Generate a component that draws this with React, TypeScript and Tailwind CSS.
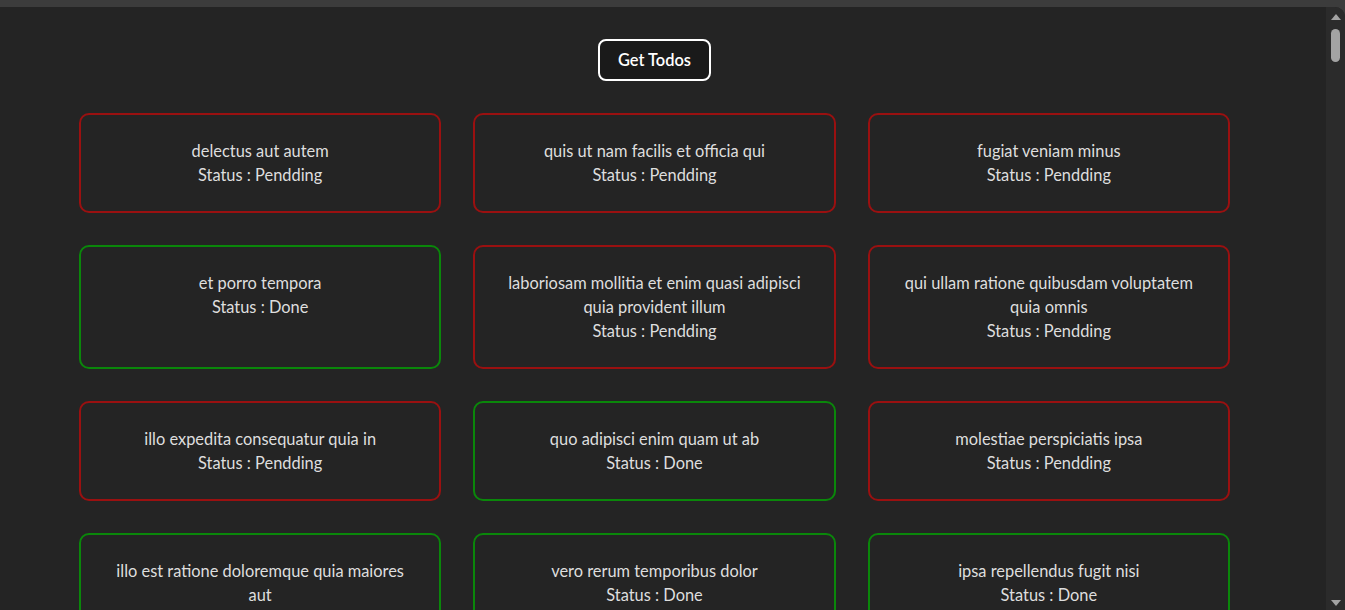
import React from "react"

type Todo = { id: number; title: string; completed: boolean }

const TODOS: Todo[] = [
  { id: 1, title: "delectus aut autem", completed: false },
  { id: 2, title: "quis ut nam facilis et officia qui", completed: false },
  { id: 3, title: "fugiat veniam minus", completed: false },
  { id: 4, title: "et porro tempora", completed: true },
  { id: 5, title: "laboriosam mollitia et enim quasi adipisci quia provident illum", completed: false },
  { id: 6, title: "qui ullam ratione quibusdam voluptatem quia omnis", completed: false },
  { id: 7, title: "illo expedita consequatur quia in", completed: false },
  { id: 8, title: "quo adipisci enim quam ut ab", completed: true },
  { id: 9, title: "molestiae perspiciatis ipsa", completed: false },
  { id: 10, title: "illo est ratione doloremque quia maiores aut", completed: true },
  { id: 11, title: "vero rerum temporibus dolor", completed: true },
  { id: 12, title: "ipsa repellendus fugit nisi", completed: true },
  { id: 13, title: "et doloremque nulla", completed: false },
  { id: 14, title: "repellendus sunt dolores architecto voluptatum", completed: true },
  { id: 15, title: "ab voluptatum amet voluptas", completed: true },
]

function TodoCard({ todo }: { todo: Todo }) {
  return (
    <div
      className={
        "rounded-[10px] border-2 px-6 py-6 text-center " +
        (todo.completed ? "border-[#0a870a]" : "border-[#9a1010]")
      }
    >
      <p>{todo.title}</p>
      <p>Status : {todo.completed ? "Done" : "Pendding"}</p>
    </div>
  )
}

export default function App() {
  return (
    <div
      className="flex h-[610px] flex-col overflow-hidden bg-[#3c3c3c] text-[16.4px] leading-6 text-[#dedede]"
      style={{ fontFamily: "Lato, 'Open Sans', sans-serif" }}
    >
      <div className="h-[7px] shrink-0" />
      <div className="flex min-h-0 flex-1 overflow-hidden rounded-tr-[10px] bg-[#242424]">
        <main className="min-w-0 flex-1 overflow-hidden">
          <div className="ml-[79px] flex w-[1151px] flex-col items-center pt-[32px]">
            <button className="rounded-lg border-2 border-white bg-[#1a1a1a] px-[18px] py-[7px] font-semibold text-white">
              Get Todos
            </button>
            <div className="mt-[32px] grid w-full grid-cols-3 gap-8">
              {TODOS.map((t) => (
                <TodoCard key={t.id} todo={t} />
              ))}
            </div>
          </div>
        </main>
        {/* fake scrollbar */}
        <div className="flex w-[19px] shrink-0 flex-col items-center bg-[#2b2b2b] pt-[7px] pb-[4px]">
          <div className="h-0 w-0 border-x-[5px] border-b-[6px] border-x-transparent border-b-[#a3a3a3]" />
          <div className="mt-[9px] h-[33px] w-[9px] rounded-full bg-[#a3a3a3]" />
          <div className="flex-1" />
          <div className="h-0 w-0 border-x-[5px] border-t-[6px] border-x-transparent border-t-[#a3a3a3]" />
        </div>
      </div>
    </div>
  )
}
